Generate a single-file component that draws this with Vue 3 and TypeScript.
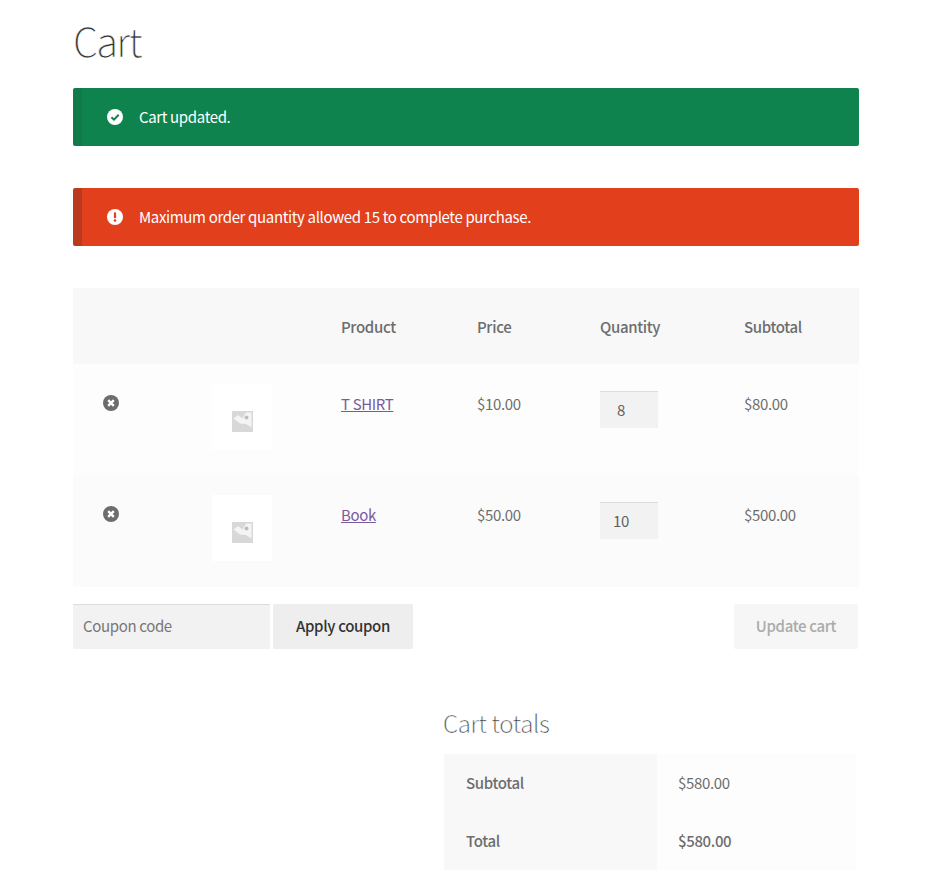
<script setup lang="ts">
interface CartItem {
  name: string
  price: string
  qty: number
  subtotal: string
}

const items: CartItem[] = [
  { name: 'T SHIRT', price: '$10.00', qty: 8, subtotal: '$80.00' },
  { name: 'Book', price: '$50.00', qty: 10, subtotal: '$500.00' },
]
</script>

<template>
  <main class="page">
    <h1 class="title">Cart</h1>

    <div class="notice success">
      <svg class="notice-icon" viewBox="0 0 16 16" aria-hidden="true">
        <circle cx="8" cy="8" r="8" fill="#fff" />
        <path d="M4.4 8.2 7 10.7l4.7-5" fill="none" stroke="#0f834d" stroke-width="2" />
      </svg>
      <span>Cart updated.</span>
    </div>

    <div class="notice error">
      <svg class="notice-icon" viewBox="0 0 16 16" aria-hidden="true">
        <circle cx="8" cy="8" r="8" fill="#fff" />
        <rect x="6.9" y="3.2" width="2.2" height="6" rx="0.8" fill="#e2401c" />
        <circle cx="8" cy="11.5" r="1.3" fill="#e2401c" />
      </svg>
      <span>Maximum order quantity allowed 15 to complete purchase.</span>
    </div>

    <table class="cart">
      <colgroup>
        <col class="c-remove" />
        <col class="c-thumb" />
        <col class="c-product" />
        <col class="c-price" />
        <col class="c-qty" />
        <col />
      </colgroup>
      <thead>
        <tr>
          <th></th>
          <th></th>
          <th>Product</th>
          <th>Price</th>
          <th>Quantity</th>
          <th>Subtotal</th>
        </tr>
      </thead>
      <tbody>
        <tr v-for="item in items" :key="item.name">
          <td class="remove-cell">
            <svg class="remove" viewBox="0 0 16 16" aria-hidden="true">
              <circle cx="8" cy="8" r="8" fill="#6d6d6d" />
              <path d="M5.2 5.2l5.6 5.6M10.8 5.2l-5.6 5.6" stroke="#fff" stroke-width="2.4" />
            </svg>
          </td>
          <td class="thumb-cell">
            <div class="thumb">
              <svg class="placeholder" viewBox="0 0 21 21" aria-hidden="true">
                <rect width="21" height="21" fill="#d8d8d8" />
                <path d="M1.5 7.5 6 4l4.5 3.5L14 1.5h5.5v15L14 13 8 12.5z" fill="#f4f4f4" />
                <circle cx="14.5" cy="6.5" r="2" fill="#bdbdbd" />
              </svg>
            </div>
          </td>
          <td><a class="link" href="#">{{ item.name }}</a></td>
          <td>{{ item.price }}</td>
          <td class="qty-cell"><div class="qty">{{ item.qty }}</div></td>
          <td>{{ item.subtotal }}</td>
        </tr>
      </tbody>
    </table>

    <div class="actions">
      <div class="coupon">
        <div class="coupon-input">Coupon code</div>
        <button class="btn" type="button">Apply coupon</button>
      </div>
      <button class="btn disabled" type="button">Update cart</button>
    </div>

    <section class="totals">
      <h2 class="totals-title">Cart totals</h2>
      <table class="totals-table">
        <tbody>
          <tr>
            <th>Subtotal</th>
            <td>$580.00</td>
          </tr>
          <tr>
            <th>Total</th>
            <td><strong class="strong">$580.00</strong></td>
          </tr>
        </tbody>
      </table>
    </section>
  </main>
</template>

<style>
html,
body {
  margin: 0;
  background: #fff;
}
</style>

<style scoped>
.page {
  width: 786px;
  height: 892px;
  overflow: hidden;
  margin-left: 73px;
  font-family: "Noto Sans CJK SC", "Noto Sans CJK JP", "Open Sans", sans-serif;
  font-size: 15px;
  letter-spacing: -0.35px;
  line-height: 24px;
  color: #6d6d6d;
}
.title {
  margin: 0;
  height: 88px;
  font-size: 40px;
  line-height: 80px;
  font-weight: 300;
  color: #333;
  letter-spacing: -1.9px;
  -webkit-text-stroke: 0.6px #fff;
}
.notice {
  display: flex;
  align-items: center;
  height: 58px;
  box-sizing: border-box;
  padding-left: 25px;
  border-left: 9px solid;
  border-radius: 2px;
  color: #fff;
  margin-bottom: 42px;
}
.notice-icon {
  width: 16px;
  height: 16px;
  margin-right: 16px;
}
.success {
  background: #0f834d;
  border-left-color: #107a49;
}
.error {
  background: #e2401c;
  border-left-color: #b93a1c;
}
.cart {
  width: 100%;
  table-layout: fixed;
  border-collapse: collapse;
}
.c-remove { width: 109px; }
.c-thumb { width: 129px; }
.c-product { width: 136px; }
.c-price { width: 123px; }
.c-qty { width: 144px; }
.cart th {
  box-sizing: border-box;
  height: 76px;
  padding: 1px 0 0 30px;
  background: #f8f8f8;
  text-align: left;
  font-weight: 500;
}
.cart td {
  height: 111px;
  box-sizing: border-box;
  padding: 28px 0 0 30px;
  vertical-align: top;
  background: #fdfdfd;
}
.cart tbody tr:nth-child(2) td {
  height: 112px;
  background: #fbfbfb;
}
.cart td.remove-cell,
.cart td.qty-cell {
  padding-top: 27px;
}
.remove {
  display: block;
  width: 16px;
  height: 16px;
  margin-top: 4px;
}
.cart td.thumb-cell {
  padding: 20px 0 0 30px;
}
.thumb {
  display: flex;
  align-items: center;
  justify-content: center;
  width: 60px;
  height: 66px;
  background: #fff;
}
.placeholder {
  width: 21px;
  height: 21px;
  margin-top: 9px;
}
.link {
  color: #7a5a9e;
  text-decoration: underline;
}
.qty {
  box-sizing: border-box;
  width: 58px;
  height: 37px;
  padding-right: 16px;
  text-align: center;
  line-height: 35px;
  background: #f2f2f2;
  border-top: 1px solid #dcdcdc;
  color: #5f5f5f;
}
.actions {
  display: flex;
  justify-content: space-between;
  padding: 17px 1px 0 0;
}
.coupon {
  display: flex;
  gap: 3px;
}
.coupon-input {
  box-sizing: border-box;
  width: 197px;
  height: 45px;
  padding-left: 10px;
  line-height: 42px;
  background: #f2f2f2;
  border-top: 1px solid #dcdcdc;
  color: #777;
}
.btn {
  height: 45px;
  width: 140px;
  padding: 0 0 2px;
  border: 0;
  border-radius: 2px;
  background: #eee;
  color: #333;
  font: 500 15px "Noto Sans CJK SC", "Noto Sans CJK JP", sans-serif;
  letter-spacing: -0.35px;
}
.disabled {
  width: 124px;
  background: #f6f6f6;
  color: #aaa;
}
.totals {
  margin: 54px 0 0 370px;
}
.totals-title {
  margin: 0;
  height: 51px;
  font-size: 24px;
  line-height: 40px;
  font-weight: 300;
  color: #333;
  letter-spacing: -0.4px;
  -webkit-text-stroke: 0.4px #fff;
}
.totals-table {
  width: 412px;
  margin-left: 1px;
  table-layout: fixed;
  border-collapse: collapse;
}
.totals-table th {
  width: 213px;
  height: 58px;
  box-sizing: border-box;
  padding: 0 0 0 22px;
  background: #f8f8f8;
  text-align: left;
  font-weight: 500;
}
.totals-table td {
  height: 58px;
  box-sizing: border-box;
  padding: 0 0 0 21px;
  background: #fdfdfd;
}
.strong {
  font-weight: 500;
}
</style>
